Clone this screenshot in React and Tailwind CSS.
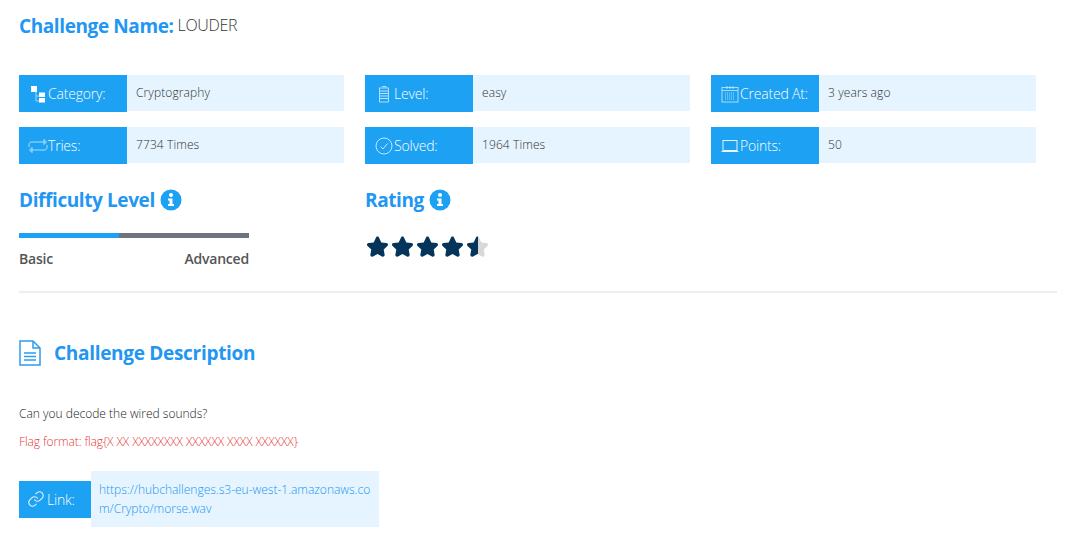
import React from 'react';

const font = { fontFamily: '"Open Sans", sans-serif' };

const CategoryIcon = () => (
  <svg width="18" height="18" viewBox="0 0 18 18" fill="none">
    <path d="M7 7v9h4M7 11h4" stroke="#9fd6fb" strokeWidth="1" />
    <rect x="2" y="1" width="6" height="6" fill="#fff" />
    <rect x="10" y="7.500" width="6" height="4.500" fill="#fff" />
    <rect x="10" y="13" width="6" height="4.500" fill="#fff" />
  </svg>
);

const RepeatIcon = () => (
  <svg width="20" height="16" viewBox="0 0 20 16" fill="none" stroke="#bfe4fd" strokeWidth="0.9">
    <path d="M1 9V6.500C1 4.500 2.500 4 4 4h13" />
    <path d="M16 1.500 18.500 4 16 6.500z" />
    <path d="M19 7v2.500c0 2-1.500 2.500-3 2.500H3" />
    <path d="M4 9.500 1.500 12 4 14.500z" />
  </svg>
);

const BatteryIcon = () => (
  <svg width="12" height="18" viewBox="0 0 12 18" fill="none" stroke="#bfe4fd" strokeWidth="0.9">
    <path d="M4 1.500h4v1.500" />
    <rect x="1.500" y="3" width="9" height="14" />
    <path d="M1.500 6h9M1.500 8.500h9M1.500 11h9M1.500 13.500h9" strokeWidth="1.200" />
  </svg>
);

const CheckIcon = () => (
  <svg width="18" height="18" viewBox="0 0 18 18" fill="none" stroke="#d5eefe" strokeWidth="0.9">
    <circle cx="9" cy="9" r="8" />
    <path d="M5.500 9.500 8 12l4.500-5.500" />
  </svg>
);

const CalendarIcon = () => (
  <svg width="18" height="18" viewBox="0 0 18 18" fill="none" stroke="#cdeafd" strokeWidth="0.8">
    <rect x="1" y="2.500" width="16" height="14.500" />
    <path d="M1 5.500h16M6 1v3M9 1v3M12 1v3" />
    <path d="M4 8h10M4 10h10M4 12h10M4 14h10" strokeDasharray="1 1" />
  </svg>
);

const LaptopIcon = () => (
  <svg width="18" height="14" viewBox="0 0 18 14" fill="none" stroke="#fff" strokeWidth="0.9">
    <rect x="2" y="1.500" width="14" height="10" />
    <path d="M0.500 12.500h17" />
  </svg>
);

const LinkIcon = () => (
  <svg width="18" height="18" viewBox="0 0 24 24" fill="none" stroke="#e3f3fe" strokeWidth="1.500" strokeLinecap="round">
    <path d="M10 13a5 5 0 0 0 7.500.5l3-3a5 5 0 0 0-7-7l-1.700 1.700" />
    <path d="M14 11a5 5 0 0 0-7.500-.5l-3 3a5 5 0 0 0 7 7l1.700-1.700" />
  </svg>
);

const InfoIcon = () => (
  <svg width="22" height="22" viewBox="0 0 22 22">
    <circle cx="11" cy="11" r="10.500" fill="#1da1f2" />
    <circle cx="11" cy="6" r="2" fill="#fff" />
    <path d="M8 9.500h4.500V15H14v2H8v-2h1.500v-3.500H8z" fill="#fff" />
  </svg>
);

const DocIcon = () => (
  <svg width="22" height="26" viewBox="0 0 22 26" fill="none" stroke="#2d9cf0" strokeWidth="1.500">
    <path d="M1 1h13l7 7v17H1z" />
    <path d="M14 1v7h7" />
    <path d="M5 13h12M5 16.500h12M5 20h12" />
  </svg>
);

const Star = ({ id, fill }) => (
  <svg width="25" height="23" viewBox="0 0 25 23">
    <defs>
      <linearGradient id={id}>
        <stop offset={fill} stopColor="#04345a" />
        <stop offset={fill} stopColor="#d8d8d8" />
      </linearGradient>
    </defs>
    <path
      d="M12.500 1.500c.8 0 1.300.5 1.600 1.200l2.200 4.700 5.100.7c1.600.2 2.100 1.800 1 2.800l-3.700 3.600.9 5.100c.3 1.500-1.300 2.600-2.600 1.900l-4.500-2.400-4.500 2.400c-1.300.7-2.900-.4-2.600-1.900l.9-5.100-3.700-3.600c-1.100-1-.6-2.600 1-2.800l5.100-.7 2.200-4.700c.3-.7.800-1.200 1.600-1.200z"
      fill={`url(#${id})`}
    />
  </svg>
);

function InfoCell({ icon, label, value }) {
  return (
    <div className="flex items-start h-[37px]">
      <div className="w-[108px] h-[37px] bg-[#1da1f2] text-white flex items-center pl-2 shrink-0 font-light text-[14px] tracking-[-0.2px]">
        <span className="w-[21px] flex justify-center mr-[0px] shrink-0">{icon}</span>
        <span className="ml-[0px]">{label}</span>
      </div>
      <div className="flex-1 h-[36px] bg-[#e5f4fe] flex items-center pl-[9px] text-[12px] font-light text-[#333] tracking-[0.1px]">
        {value}
      </div>
    </div>
  );
}

export default function App() {
  return (
    <div className="w-[1070px] h-[548px] overflow-hidden bg-white pl-[19px] pr-[13px]" style={font}>
      <div className="flex items-center h-[26px] mt-[13px] gap-1">
        <span className="text-[#2196f3] font-bold text-[19px] tracking-[-0.4px]">Challenge Name:</span>
        <span className="font-light text-[16px] text-[#333] tracking-[-0.3px] -mt-[3px]">LOUDER</span>
      </div>

      <div className="grid grid-cols-[325px_325px_325px] gap-x-[21px] gap-y-[15px] mt-[36px]">
        <InfoCell icon={<CategoryIcon />} label="Category:" value="Cryptography" />
        <InfoCell icon={<BatteryIcon />} label="Level:" value="easy" />
        <InfoCell icon={<CalendarIcon />} label="Created At:" value="3 years ago" />
        <InfoCell icon={<RepeatIcon />} label="Tries:" value="7734 Times" />
        <InfoCell icon={<CheckIcon />} label="Solved:" value="1964 Times" />
        <InfoCell icon={<LaptopIcon />} label="Points:" value="50" />
      </div>

      <div className="grid grid-cols-[325px_325px] gap-x-[21px] mt-[22px]">
        <div className="w-[230px]">
          <div className="flex items-center h-[28px] gap-[5px]">
            <span className="text-[#2196f3] font-bold text-[19px] tracking-[-0.4px]">Difficulty Level</span>
            <InfoIcon />
          </div>
          <div className="flex h-[5px] mt-[19px] bg-[#6c757d]">
            <div className="w-[100px] bg-[#1da1f2]" />
          </div>
          <div className="flex justify-between mt-[10px] text-[14px] font-semibold text-[#555] tracking-[-0.2px]">
            <span>Basic</span>
            <span>Advanced</span>
          </div>
        </div>
        <div>
          <div className="flex items-center h-[28px] gap-[5px]">
            <span className="text-[#2196f3] font-bold text-[19px] tracking-[-0.4px]">Rating</span>
            <InfoIcon />
          </div>
          <div className="flex mt-[21px]">
            <Star id="s1" fill="100%" />
            <Star id="s2" fill="100%" />
            <Star id="s3" fill="100%" />
            <Star id="s4" fill="100%" />
            <Star id="s5" fill="50%" />
          </div>
        </div>
      </div>

      <div className="h-[2px] bg-[#eeeeee] mt-[22px]" />

      <div className="flex items-center mt-[47px] h-[26px]">
        <DocIcon />
        <span className="ml-[13px] text-[#2196f3] font-bold text-[19px] tracking-[-0.3px]">Challenge Description</span>
      </div>

      <p className="mt-[39px] text-[12px] font-light text-[#222] leading-[18px]">Can you decode the wired sounds?</p>
      <p className="mt-[10px] text-[12px] font-light text-[#e53935] leading-[18px] tracking-[-0.1px]">
        Flag format: flag{'{'}X XX XXXXXXXX XXXXXX XXXX XXXXXX{'}'}
      </p>

      <div className="flex items-center mt-[20px]">
        <div className="w-[72px] h-[37px] bg-[#1da1f2] text-white flex items-center pl-2 font-light text-[14px] tracking-[-0.2px]">
          <LinkIcon />
          <span className="ml-[2px]">Link:</span>
        </div>
        <div className="w-[288px] h-[56px] bg-[#e5f4fe] px-2 py-[9px] text-[12px] leading-[19px] font-light text-[#2196f3] break-all">
          https://hubchallenges.s3-eu-west-1.amazonaws.com/Crypto/morse.wav
        </div>
      </div>
    </div>
  );
}
